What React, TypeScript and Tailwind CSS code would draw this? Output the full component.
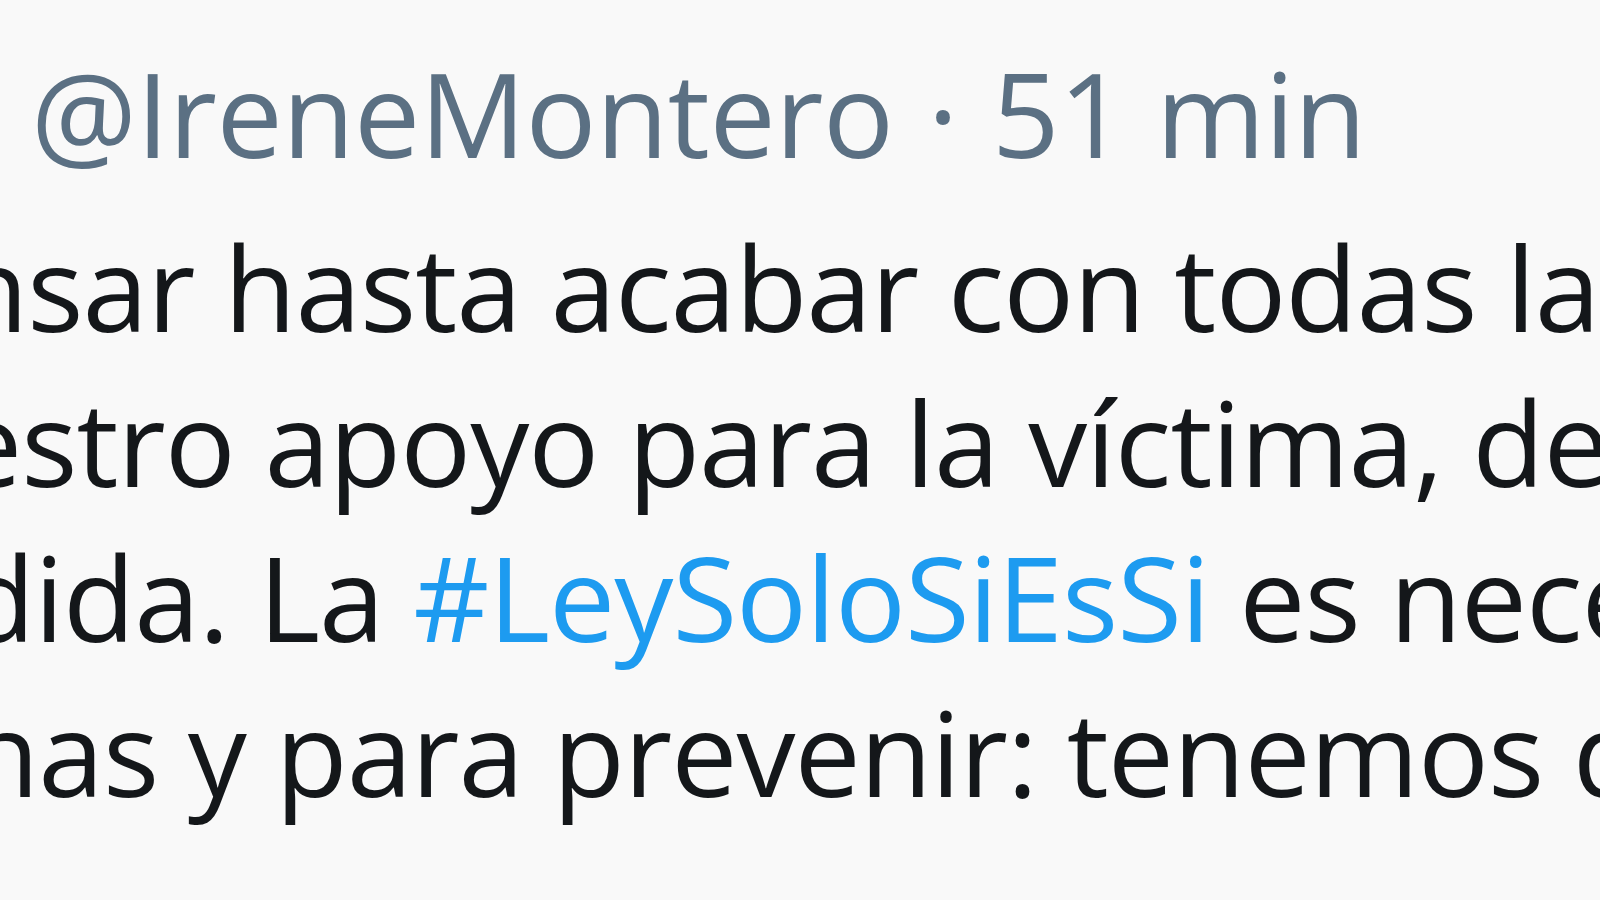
const lines = [
  { text: [{ t: "nsar hasta acabar con todas las" }], indent: "ml-[-44px]" },
  { text: [{ t: "estro apoyo para la víctima, de" }], indent: "ml-[-44px]" },
  {
    text: [{ t: "dida. La " }, { t: "#LeySoloSiEsSi", link: true }, { t: " es necesaria" }],
    indent: "ml-[-37px]",
  },
  { text: [{ t: "nas y para prevenir: tenemos que" }], indent: "ml-[-33px]" },
];

export default function App() {
  return (
    <div className="w-[1600px] h-[900px] overflow-hidden bg-[#f9f9f9] font-['Open_Sans',sans-serif] text-[118px] leading-[155px]">
      <div className="pt-[35px]">
        <div className="flex items-baseline whitespace-nowrap pl-[31px] tracking-[-0.5px] text-[#5b7083]">
          <span>@IreneMontero</span>
          <span className="mx-[34px]">·</span>
          <span>51 min</span>
        </div>
        <div className="mt-[19px] tracking-[-1px] text-[#14171a]">
          {lines.map((line, i) => (
            <div key={i} className={`whitespace-nowrap ${line.indent}`}>
              {line.text.map((part, j) =>
                part.link ? (
                  <span key={j} className="text-[#1d9bf0]">{part.t}</span>
                ) : (
                  <span key={j}>{part.t}</span>
                )
              )}
            </div>
          ))}
        </div>
      </div>
    </div>
  );
}
